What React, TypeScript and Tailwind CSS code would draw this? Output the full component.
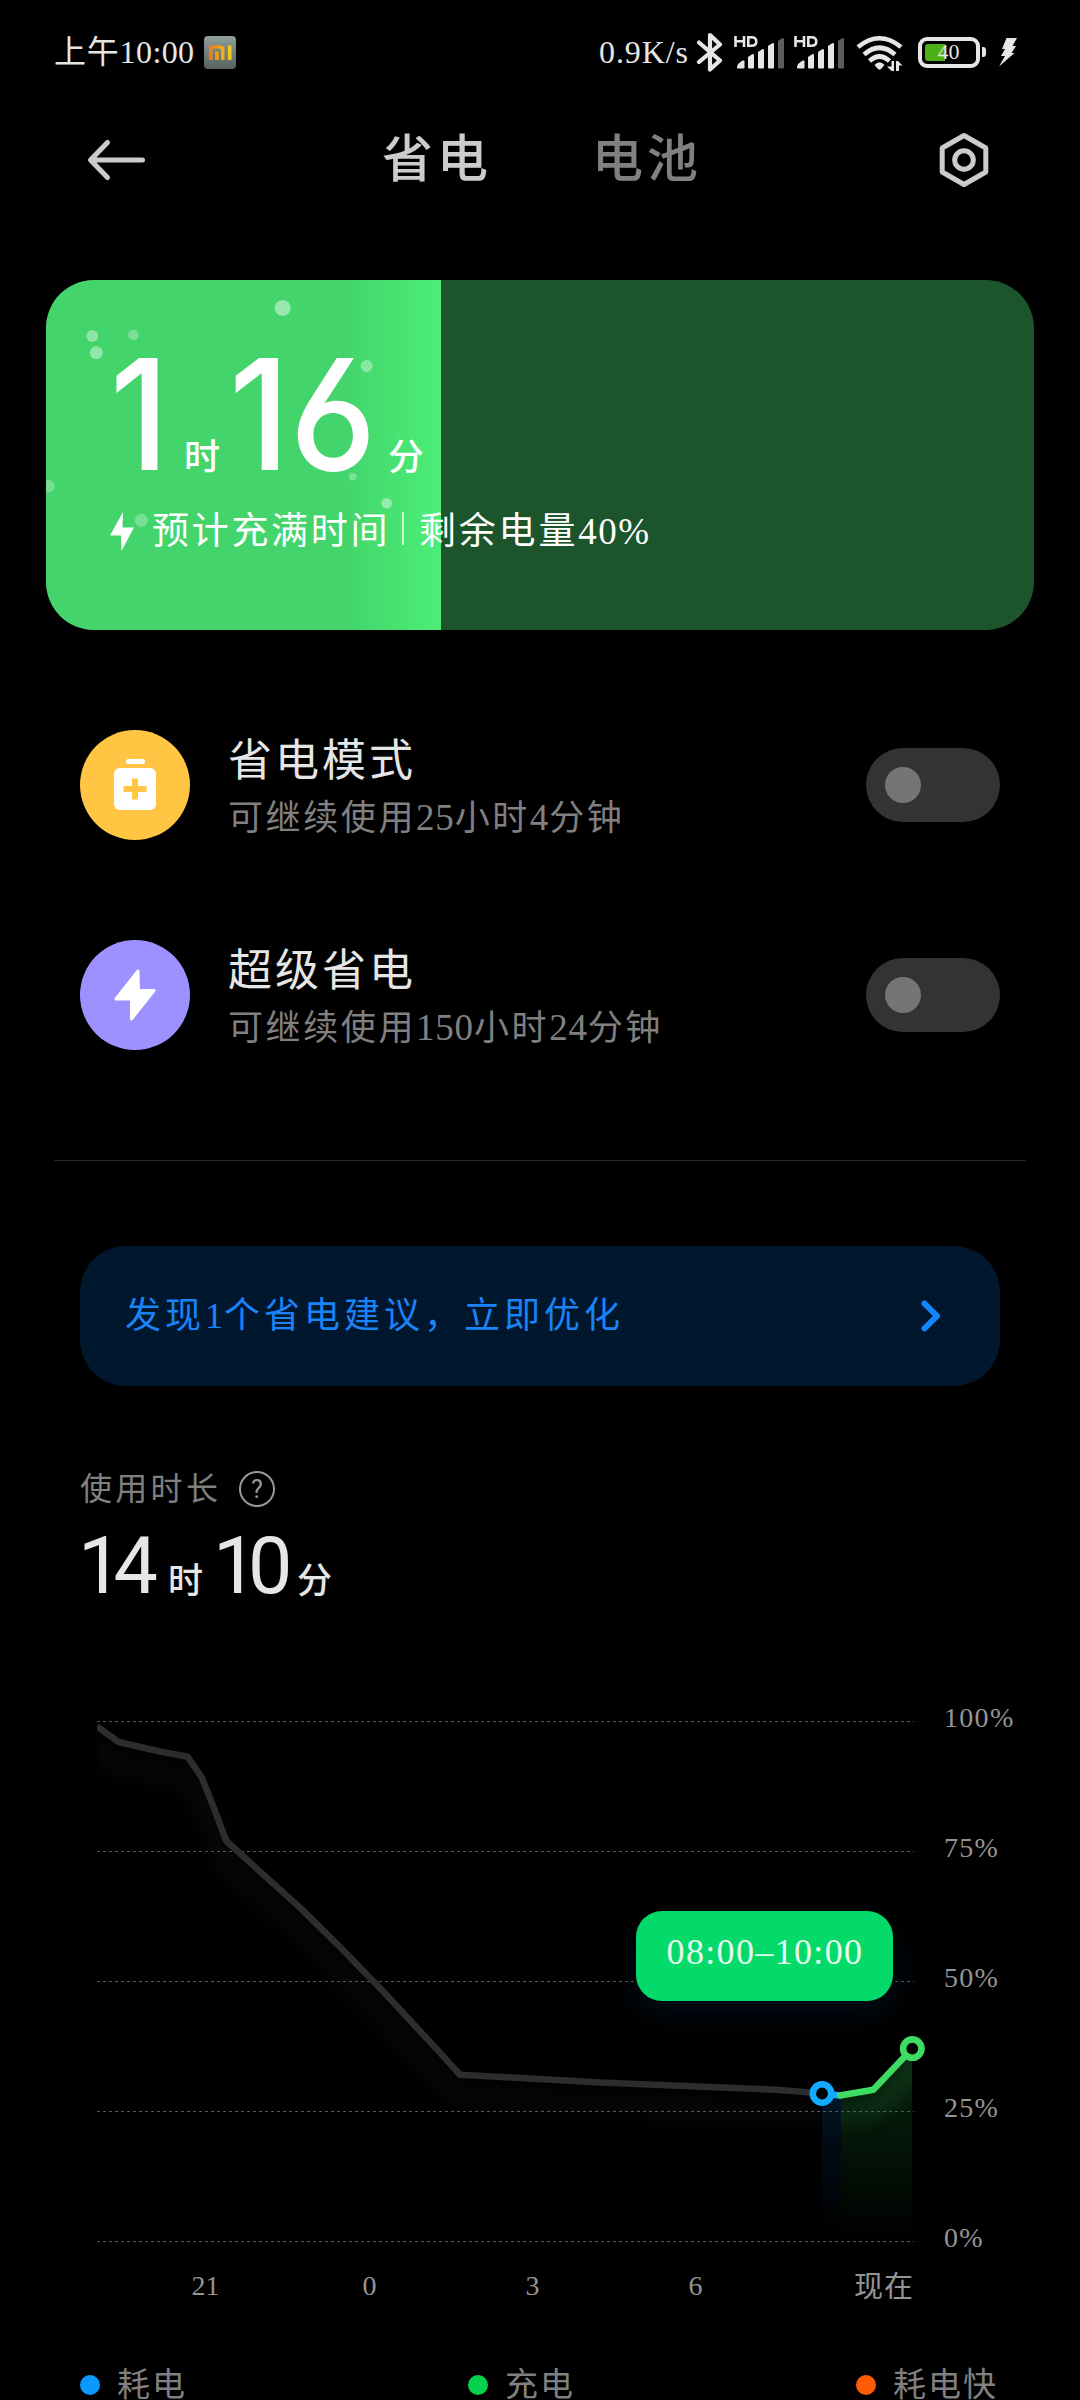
import React from "react";

const serif = "font-['Liberation_Serif','Noto_Sans_CJK_SC',serif]";
const sans = "font-['Roboto','Noto_Sans_CJK_SC',sans-serif]";
const display = "font-['Inter','Noto_Sans_CJK_SC',sans-serif]";

function Signal() {
  return (
    <svg width="51" height="34" viewBox="0 0 51 34" className="shrink-0">
      <g stroke="#e6e6e6" strokeWidth="2.6" fill="none">
        <path d="M1.5 1v11M10 1v11M1.5 6.3H10" />
        <path d="M14.3 2.2h3.2c3 0 4.800 1.600 4.800 4.300s-1.800 4.300-4.800 4.300h-3.200z" />
      </g>
      <g fill="#e6e6e6">
        <path d="M3 32l1-3 4.500-3.500h1q1 0 1 1v6q0 1-1 1H4q-1 0-1-1z" />
        <path d="M14 22l4.500-3q1.500 0 1.500 1v12.500q0 1-1 1H15q-1 0-1-1z" />
        <path d="M24 17l4.500-3q1.500 0 1.500 1v17.500q0 1-1 1h-4q-1 0-1-1z" />
        <path d="M34 11l4.500-3q1.500 0 1.500 1v23.500q0 1-1 1h-4q-1 0-1-1z" />
      </g>
      <path d="M44 6l4.500-3q1.500 0 1.500 1v28.500q0 1-1 1h-4q-1 0-1-1z" fill="#5c5c5c" />
    </svg>
  );
}

function StatusBar() {
  return (
    <div className={`flex h-[104px] items-center pl-[54px] text-[#e6e6e6] ${serif}`}>
      <span className="flex w-[150px] items-center whitespace-nowrap text-[32px] leading-[40px]">
        <span className="tracking-[0.800px]">上午</span>
        <span className="tracking-[0.400px]">10:00</span>
      </span>
      <svg width="32" height="33" viewBox="0 0 32 33" className="shrink-0">
        <defs>
          <linearGradient id="tile" x1="0" y1="0" x2="0" y2="1">
            <stop offset="0" stopColor="#8f9f9b" />
            <stop offset="1" stopColor="#56635f" />
          </linearGradient>
          <linearGradient id="mi" x1="5" y1="0" x2="28" y2="0" gradientUnits="userSpaceOnUse">
            <stop offset="0" stopColor="#f47a12" />
            <stop offset="1" stopColor="#f5cf1c" />
          </linearGradient>
        </defs>
        <rect width="32" height="33" rx="4" fill="url(#tile)" />
        <path d="M5 24V9.500h11q4.500 0 4.500 4V24H17V14q0-1.500-1.500-1.500H8.500V24zM11 15.500h3.800V24H11zM23.800 9.500h3.700V24h-3.700z" fill="url(#mi)" />
      </svg>
      <span className="ml-[363px] w-[96px] whitespace-nowrap text-[32px] leading-[40px] tracking-[0.900px]">0.9K/s</span>
      <svg width="28" height="40" viewBox="0 0 28 40" className="ml-[1px] shrink-0">
        <path d="M3 10.500L24 28.500 14 37.500V3L24 12.500 3 30" fill="none" stroke="#e6e6e6" strokeWidth="4.200" strokeLinejoin="round" strokeLinecap="round" />
      </svg>
      <div className="ml-[10px] flex gap-[9px]">
        <Signal />
        <Signal />
      </div>
      <svg width="48" height="38" viewBox="0 0 48 38" className="ml-[11px] mt-[3px] shrink-0">
        <g fill="none" stroke="#e6e6e6" strokeWidth="4.600">
          <path d="M2 12Q23.500-5.500 45 12" />
          <path d="M8 19.500Q23.500 6 39 19.500" />
          <path d="M13.500 26Q23.500 17 33.500 26" />
        </g>
        <path d="M18.500 30q5-5.500 10 0l-3.500 4q-1.500 1.500-3 0z" fill="#e6e6e6" />
        <path d="M35.500 26h2.500v10h-2.500l-4.500-4.500h4.500zM40 36V26h2l4.500 4.500H43V36z" fill="#e6e6e6" />
      </svg>
      <div className="ml-[14px] flex items-center gap-[2px]">
        <div className="relative flex h-[31px] w-[62px] items-center rounded-[9px] border-[4px] border-[#e6e6e6] pl-[3px]">
          <div className="h-[17px] w-[20px] rounded-l-[3px] bg-[#4caf13]" />
          <span className="absolute left-[15.500px] top-[-1px] text-[22px] leading-[23px]">40</span>
        </div>
        <div className="h-[10px] w-[4px] rounded-r-[3px] bg-[#e6e6e6]" />
      </div>
      <svg width="18" height="30" viewBox="0 0 18 30" className="ml-[13px] shrink-0">
        <path d="M7.500 1H18l-4.500 8h3.500l-4.500 7h3L0 29.500 6 19H2l4-7H3z" fill="#e6e6e6" />
      </svg>
    </div>
  );
}

function Header() {
  return (
    <div className={`flex h-[112px] items-center pl-[86px] ${serif}`}>
      <svg width="60" height="44" viewBox="0 0 60 44" className="shrink-0">
        <path d="M21.500 4.500L4.500 22l17 17.500M5 22h51.500" fill="none" stroke="#ccc" strokeWidth="5" strokeLinecap="round" strokeLinejoin="round" />
      </svg>
      <span className="ml-[236px] w-[210px] whitespace-nowrap text-[51px] font-medium leading-[60px] tracking-[4px] text-[#ccc]">省电</span>
      <span className="w-[345px] whitespace-nowrap text-[51px] font-medium leading-[60px] tracking-[4px] text-[#808080]">电池</span>
      <svg width="54" height="56" viewBox="0 0 54 56" className="shrink-0">
        <path d="M27 3.500L48.800 16v24L27 52.500 5.200 40V16z" fill="none" stroke="#ccc" strokeWidth="5" strokeLinejoin="round" />
        <circle cx="27" cy="28" r="9.300" fill="none" stroke="#ccc" strokeWidth="5" />
      </svg>
    </div>
  );
}

const bubbles = [
  [236.7, 28, 8, 0.45],
  [46.3, 56, 6, 0.4],
  [87.3, 55, 5.3, 0.3],
  [50.3, 72.7, 6.5, 0.42],
  [320.7, 86, 6, 0.38],
  [2.3, 206.3, 6.2, 0.28],
  [306.7, 196.7, 3.7, 0.3],
  [340.7, 223.3, 5.3, 0.42],
  [95.3, 240.3, 6.5, 0.28],
  [202, 250, 5, 0.15],
];

function ChargeCard() {
  return (
    <div className="relative mx-[46px] mt-[64px] h-[350px] overflow-hidden rounded-[48px] bg-[#1c542b]">
      <div className="absolute inset-y-0 left-0 w-[395px] bg-[linear-gradient(90deg,#43d56b_0%,#43d56b_76%,#4cee77_100%)]" />
      <svg width="395" height="350" className="absolute left-0 top-0">
        {bubbles.map(([x, y, r, o]) => (
          <circle key={x} cx={x} cy={y} r={r} fill="#fff" opacity={o} />
        ))}
      </svg>
      <div className="relative flex flex-col pl-[64px] pt-[54px] text-white">
        <div className={`flex h-[160px] items-baseline font-medium ${display}`}>
          <span className="w-[74px] origin-left scale-x-[0.92] text-[154px] leading-[160px] [font-feature-settings:'ss01']">1</span>
          <span className="w-[45px] text-[36px]">时</span>
          <span className="w-[159px] origin-left scale-x-[0.95] text-[154px] leading-[160px] [font-feature-settings:'ss01']">16</span>
          <span className="text-[36px]">分</span>
        </div>
        <div className={`mt-[16px] flex h-[44px] items-center whitespace-nowrap text-[37px] leading-[44px] ${serif}`}>
          <svg width="24" height="40" viewBox="0 0 24 40" className="shrink-0">
            <path d="M13 0L0 23.500h11L11.500 39 24 15.500H12.500z" fill="#fff" />
          </svg>
          <span className="ml-[18px] w-[250px] tracking-[2.700px]">预计充满时间</span>
          <span className="mb-[8px] h-[33px] w-[2px] bg-white/70" />
          <span className="ml-[15px] tracking-[2.800px]">剩余电量</span>
          <span className="tracking-[1.500px]">40%</span>
        </div>
      </div>
    </div>
  );
}

function Toggle() {
  return (
    <div className="flex h-[74px] w-[134px] items-center rounded-full bg-[#333] pl-[19px]">
      <div className="size-[36px] rounded-full bg-[#757575]" />
    </div>
  );
}

function ModeRow({ icon, title, children }: { icon: React.ReactNode; title: string; children: React.ReactNode }) {
  return (
    <div className={`flex h-[110px] items-center px-[80px] ${serif}`}>
      {icon}
      <div className="ml-[38px] flex-1 whitespace-nowrap pt-[8px]">
        <div className="text-[44px] leading-[54px] tracking-[3px] text-[#e6e6e6]">{title}</div>
        <div className="mt-[4px] text-[35px] leading-[50px] tracking-[2.600px] text-[#808080]">{children}</div>
      </div>
      <Toggle />
    </div>
  );
}

function Num({ children }: { children: React.ReactNode }) {
  return <span className="text-[37px] tracking-[0.800px]">{children}</span>;
}

const levels = ["100%", "75%", "50%", "25%", "0%"];
const gridY = [21, 151, 281, 411, 541];

function Chart() {
  return (
    <div className={`mt-[84px] ${serif}`}>
      <div className="flex pl-[97px]">
        <div className="relative h-[560px] w-[847px]">
          <svg width="847" height="560" viewBox="97 1700 847 560" className="absolute left-0 top-0">
            <defs>
              <linearGradient id="greenArea" x1="0" y1="2050" x2="0" y2="2238" gradientUnits="userSpaceOnUse">
                <stop offset="0" stopColor="#092a12" />
                <stop offset="0.350" stopColor="#051a0a" />
                <stop offset="1" stopColor="#000" />
              </linearGradient>
              <linearGradient id="blueArea" x1="0" y1="2095" x2="0" y2="2238" gradientUnits="userSpaceOnUse">
                <stop offset="0" stopColor="#03182a" />
                <stop offset="0.300" stopColor="#010b15" />
                <stop offset="1" stopColor="#000" />
              </linearGradient>
              <filter id="glow" x="-20%" y="-50%" width="140%" height="220%" colorInterpolationFilters="sRGB">
                <feGaussianBlur stdDeviation="8" />
              </filter>
              <clipPath id="greenClip">
                <path d="M841 2095L873 2090 912 2049V2240H841z" />
              </clipPath>
            </defs>
            <path d="M90 1748L118.500 1764 187.500 1779 202 1800 226 1863 301 1931 460 2097 600 2104 822 2115" fill="none" stroke="#070707" strokeWidth="20" filter="url(#glow)" />
            <path d="M822 2094H841V2240H822z" fill="url(#blueArea)" />
            <path d="M841 2095L873 2090 912 2049V2240H841z" fill="url(#greenArea)" />
            <g clipPath="url(#greenClip)">
              <path d="M825 2117L873 2112 925 2060" fill="none" stroke="#1c5229" strokeWidth="16" opacity="0.350" filter="url(#glow)" />
            </g>
            {gridY.map((y) => (
              <path key={y} d={`M97 ${1700.5 + y}H914`} stroke="#585858" strokeWidth="1" strokeDasharray="3 3" />
            ))}
            <path
              d="M97 1726.500L118.500 1742 160 1751.500 187.500 1756.700 202 1778 213 1805.700 226.300 1841 301 1908.600 342.400 1949.400 383.700 1992 407.800 2018 438.800 2051.400 460 2074.700 600 2082.400 777 2089.800 822 2093.500"
              fill="none"
              stroke="#2d2d2f"
              strokeWidth="6.500"
              strokeLinejoin="round"
            />
            <path d="M822 2093.500L841 2095.500" stroke="#12abff" strokeWidth="6.500" />
            <path d="M840 2095.500L873.300 2089.800 912.300 2048.600" fill="none" stroke="#3fdc64" strokeWidth="6.500" strokeLinejoin="round" strokeLinecap="round" />
            <circle cx="822" cy="2093.500" r="9.200" fill="#000" stroke="#12abff" strokeWidth="6.600" />
            <circle cx="912.300" cy="2048.600" r="9.200" fill="#000" stroke="#3fdc64" strokeWidth="6.600" />
          </svg>
          <div className="absolute left-[539px] top-[211px] flex h-[90px] w-[257px] justify-center rounded-[26px] bg-[#03da69] shadow-[0_12px_28px_rgba(10,60,110,0.22)]">
            <span className="whitespace-nowrap pl-[1px] text-[36px] leading-[82px] tracking-[1.350px] text-white/90">08:00–10:00</span>
          </div>
        </div>
        <div className="flex h-[560px] flex-col gap-[90px] text-[28px] leading-[40px] tracking-[1.300px] text-[#949494]">
          {levels.map((l) => (
            <span key={l} className="-mt-[2px] mb-[2px] h-[40px]">
              {l}
            </span>
          ))}
        </div>
      </div>
      <div className="flex h-[52px] items-center pl-[125px] text-[28px] leading-[40px] text-[#949494]">
        <span className="w-[161px] text-center">21</span>
        <span className="w-[167px] text-center">0</span>
        <span className="w-[159px] text-center">3</span>
        <span className="w-[167px] text-center">6</span>
        <span className="ml-[75px] mt-[2px] text-[29px] tracking-[1px]">现在</span>
      </div>
    </div>
  );
}

function Legend({ dot, label }: { dot: string; label: string }) {
  return (
    <div className="flex items-center whitespace-nowrap">
      <span className={`size-[20px] rounded-full ${dot}`} />
      <span className="ml-[17px] text-[33px] leading-[44px] tracking-[2px] text-[#808080]">{label}</span>
    </div>
  );
}

export default function App() {
  return (
    <div lang="zh-CN" className="h-[2400px] w-[1080px] overflow-hidden bg-black">
      <StatusBar />
      <Header />
      <ChargeCard />
      <div className="mt-[100px] flex flex-col gap-[100px]">
        <ModeRow
          title="省电模式"
          icon={
            <div className="flex size-[110px] flex-col items-center rounded-full bg-[#ffc543] pt-[29px]">
              <div className="h-[5px] w-[19px] rounded-full bg-white" />
              <svg width="42" height="42" viewBox="0 0 42 42" className="mt-[4px]">
                <rect width="42" height="42" rx="6" fill="#fff" />
                <path d="M21 10.500v21M9.500 21h23" stroke="#ffc543" strokeWidth="6" />
              </svg>
            </div>
          }
        >
          可继续使用<Num>25</Num>小时<Num>4</Num>分钟
        </ModeRow>
        <ModeRow
          title="超级省电"
          icon={
            <div className="flex size-[110px] items-center justify-center rounded-full bg-[#9c91ff]">
              <svg width="44" height="54" viewBox="0 0 44 54">
                <path d="M25 3L3 31h15.500V51L41 22.500H25.500z" fill="#fff" stroke="#fff" strokeWidth="3" strokeLinejoin="round" />
              </svg>
            </div>
          }
        >
          可继续使用<Num>150</Num>小时<Num>24</Num>分钟
        </ModeRow>
      </div>
      <div className="mx-[54px] mt-[110px] h-px bg-[#262626]" />
      <div className={`mx-[80px] mt-[85px] flex h-[140px] items-center justify-between whitespace-nowrap rounded-[46px] bg-[#00172d] pl-[45px] pr-[59px] text-[36px] leading-[50px] text-[#1a83f7] ${serif}`}>
        <span className="tracking-[4px]">
          发现<span className="tracking-[1px]">1</span>个省电建议，立即优化
        </span>
        <svg width="22" height="34" viewBox="0 0 22 34">
          <path d="M5.500 4.500L18 17 5.500 29.500" fill="none" stroke="#1485ff" strokeWidth="6" strokeLinecap="round" strokeLinejoin="round" />
        </svg>
      </div>
      <div className={`mt-[79px] flex h-[48px] items-center pl-[80px] text-[#808080] ${serif}`}>
        <span className="w-[159px] whitespace-nowrap text-[32px] leading-[48px] tracking-[3.300px]">使用时长</span>
        <div className={`flex size-[36px] items-center justify-center rounded-full border-[2.500px] border-[#999] text-[25px] leading-none text-[#999] ${sans}`}>?</div>
      </div>
      <div className={`flex h-[103px] items-baseline pl-[78px] pt-[1px] text-[#e6e6e6] ${sans}`}>
        <span className="w-[90px] text-[79px] leading-[104px] tracking-[-9px]">14</span>
        <span className="w-[45px] text-[35px] font-medium">时</span>
        <span className="w-[84px] text-[79px] leading-[104px] tracking-[-9.500px]">10</span>
        <span className="text-[35px] font-medium">分</span>
      </div>
      <Chart />
      <div className={`mt-[51px] flex justify-between pl-[80px] pr-[82px] ${serif}`}>
        <Legend dot="bg-[#0a99ff]" label="耗电" />
        <Legend dot="bg-[#05d14c]" label="充电" />
        <Legend dot="bg-[#ff5a05]" label="耗电快" />
      </div>
    </div>
  );
}
